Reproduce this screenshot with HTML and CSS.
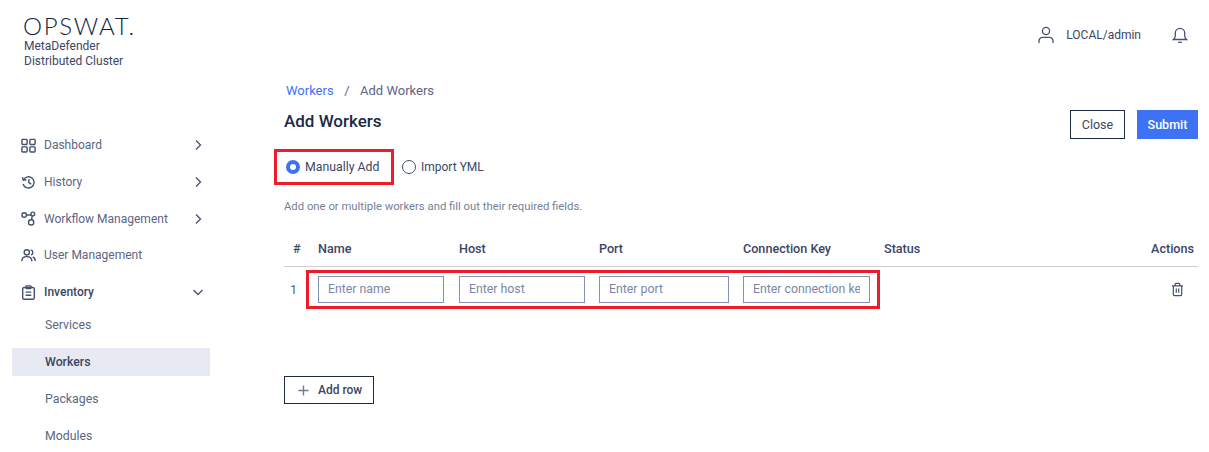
FILE: index.html
```html
<!DOCTYPE html>
<html lang="en">
<head>
<meta charset="utf-8">
<title>Add Workers</title>
<link rel="stylesheet" href="styles.css">
</head>
<body>
<div class="app">
  <aside class="sidebar">
    <div class="brand">
      <div class="logo">OPSWAT.</div>
      <div class="product">MetaDefender<br>Distributed Cluster</div>
    </div>
    <nav class="nav">
      <a class="nav-item">
        <svg class="nav-icon" viewBox="0 0 16 16"><rect x="1" y="1.500" width="5.500" height="5.500" rx=".8"/><rect x="9.500" y="1.500" width="5.500" height="5.500" rx=".8"/><rect x="1" y="9.500" width="5.500" height="5.500" rx=".8"/><rect x="9.500" y="9.500" width="5.500" height="5.500" rx=".8"/></svg>
        <span class="nav-label">Dashboard</span>
        <svg class="chev" viewBox="0 0 12 12"><path d="M4 1.500 8.500 6 4 10.500"/></svg>
      </a>
      <a class="nav-item">
        <svg class="nav-icon" viewBox="0 0 16 16"><path d="M2.600 5.200A6 6 0 1 1 2.200 9.600"/><path d="M1.600 2.200 2.400 5.600 5.800 5"/><path d="M8.400 4.600V8.200L11 9.800"/></svg>
        <span class="nav-label">History</span>
        <svg class="chev" viewBox="0 0 12 12"><path d="M4 1.500 8.500 6 4 10.500"/></svg>
      </a>
      <a class="nav-item">
        <svg class="nav-icon" viewBox="0 0 16 16"><circle cx="3.400" cy="4.200" r="2.400"/><circle cx="12.600" cy="3.200" r="2"/><circle cx="10.800" cy="12.200" r="2.800"/><path d="M5.800 4.200h4.800M12 5.200l-.8 4.200"/></svg>
        <span class="nav-label">Workflow Management</span>
        <svg class="chev" viewBox="0 0 12 12"><path d="M4 1.500 8.500 6 4 10.500"/></svg>
      </a>
      <a class="nav-item">
        <svg class="nav-icon" viewBox="0 0 16 16"><circle cx="6.200" cy="4.600" r="2.800"/><path d="M.8 14c0-3 2.200-4.800 5.400-4.800s5.400 1.800 5.400 4.800"/><path d="M10.400 2c1.400.3 2.200 1.400 2.200 2.700s-.8 2.300-2 2.700M12.600 9.600c1.600.6 2.600 2.200 2.600 4.200"/></svg>
        <span class="nav-label">User Management</span>
      </a>
      <a class="nav-item open">
        <svg class="nav-icon" viewBox="0 0 16 16"><rect x="1.800" y="2.600" width="12.400" height="12.600" rx="1.600"/><rect x="5.400" y=".9" width="5.200" height="3" rx=".6"/><path d="M5 7.600h6M5 11h6"/></svg>
        <span class="nav-label">Inventory</span>
        <svg class="chev" viewBox="0 0 12 12"><path d="M1.500 4 6 8.500 10.500 4"/></svg>
      </a>
      <a class="sub-item">Services</a>
      <a class="sub-item active">Workers</a>
      <a class="sub-item">Packages</a>
      <a class="sub-item">Modules</a>
    </nav>
  </aside>

  <div class="content">
    <header class="topbar">
      <svg class="user-icon" viewBox="0 0 16 18"><circle cx="8" cy="5" r="3.600"/><path d="M1 17v-1.600C1 13 2.800 11.400 5 11.400h6c2.200 0 4 1.600 4 4V17"/></svg>
      <span class="user-name">LOCAL/admin</span>
      <svg class="bell-icon" viewBox="0 0 16 18"><path d="M1.500 13.500c1.200-1 1.800-2.200 1.800-4V7a4.700 4.700 0 0 1 9.400 0v2.500c0 1.800.6 3 1.800 4z"/><path d="M6.200 16.300h3.600"/></svg>
    </header>

    <main class="main">
      <div class="breadcrumb"><a class="crumb-link">Workers</a><span class="crumb-sep">/</span><span>Add Workers</span></div>
      <div class="title-row">
        <h1 class="title">Add Workers</h1>
        <div class="actions">
          <button class="btn btn-outline">Close</button>
          <button class="btn btn-primary">Submit</button>
        </div>
      </div>
      <div class="radio-row">
        <label class="radio-box"><span class="radio checked"></span>Manually Add</label>
        <label class="radio-plain"><span class="radio"></span>Import YML</label>
      </div>
      <p class="hint">Add one or multiple workers and fill out their required fields.</p>

      <div class="table">
        <div class="grid-row thead">
          <span class="num">#</span><span>Name</span><span>Host</span><span>Port</span><span>Connection Key</span><span>Status</span><span class="right">Actions</span>
        </div>
        <div class="grid-row tbody">
          <span class="index">1</span>
          <input class="field w-name" placeholder="Enter name">
          <input class="field w-host" placeholder="Enter host">
          <input class="field w-port" placeholder="Enter port">
          <input class="field w-key" placeholder="Enter connection key">
          <span></span>
          <span class="right"><svg class="trash" viewBox="0 0 14 15"><path d="M1 3.500h12M4.500 3.500V2c0-.6.400-1 1-1h3c.6 0 1 .4 1 1v1.500M2.500 3.500v9.300c0 .7.500 1.200 1.200 1.200h6.600c.7 0 1.200-.5 1.200-1.200V3.500M5.700 6.500v4.500M8.300 6.500v4.500"/></svg></span>
          <div class="annotation"></div>
        </div>
      </div>

      <button class="btn-add"><svg class="plus" viewBox="0 0 12 12"><path d="M6 .5v11M.5 6h11"/></svg>Add row</button>
    </main>
  </div>
</div>
</body>
</html>
```

FILE: styles.css
```css
* { box-sizing: border-box; }
html, body { margin: 0; height: 452px; overflow: hidden; background: #fff; }
body { font-family: "Roboto", "Liberation Sans", sans-serif; font-size: 12px; color: #3b4664; }

.app { display: flex; height: 452px; }

.sidebar { width: 198px; margin-left: 12px; flex: none; }
.brand { padding: 13px 0 0 11px; height: 127px; }
.logo { font-family: "Lato", sans-serif; font-weight: 300; font-size: 24px; line-height: 26px; letter-spacing: 1.700px; color: #16233f; }
.product { font-size: 12px; line-height: 15px; color: #3b4664; padding-left: 1px; }

.nav { display: flex; flex-direction: column; }
.nav-item { display: flex; align-items: center; height: 36.700px; padding-left: 9px; font-size: 12px; color: #5a6684; }
.nav-item.open { color: #3b4664; font-weight: 500; }
.nav-icon { width: 15px; height: 15px; flex: none; fill: none; stroke: #465170; stroke-width: 1.500; margin-right: 8px; }
.nav-label { flex: 1; }
.chev { width: 12px; height: 12px; flex: none; margin-right: 6px; fill: none; stroke: #465170; stroke-width: 1.300; }
.sub-item { display: flex; align-items: center; height: 28px; padding: 0 0 1px 33px; margin-bottom: 8.900px; font-size: 12.300px; color: #5a6684; }
.open + .sub-item { margin-top: 1px; }
.sub-item.active { background: #e7eaf2; color: #3b4664; font-weight: 500; }

.content { flex: 1; min-width: 0; display: flex; flex-direction: column; }
.topbar { height: 69px; display: flex; align-items: center; justify-content: flex-end; padding-right: 21px; }
.user-icon { width: 16px; height: 18px; fill: none; stroke: #465170; stroke-width: 1.300; margin-right: 12px; }
.user-name { font-size: 12px; color: #3b4664; margin-right: 31px; }
.bell-icon { width: 16px; height: 18px; fill: none; stroke: #465170; stroke-width: 1.300; }

.main { padding: 0 11px 0 74px; }
.breadcrumb { padding: 14px 0 0 2px; height: 33px; font-size: 13px; line-height: 16px; color: #5a6684; }
.crumb-link { color: #3d72f5; }
.crumb-sep { margin: 0 10.500px; }
.title-row { display: flex; justify-content: space-between; align-items: flex-start; height: 47px; padding-top: 8px; }
.title { margin: 0; font-size: 17px; font-weight: 500; line-height: 22px; color: #1d2a44; }
.actions { display: flex; gap: 12px; }
.btn { height: 29px; font-family: inherit; font-size: 12.500px; padding: 0; cursor: pointer; }
.btn-outline { width: 55px; background: #fff; border: 1px solid #1d2a44; color: #3b4664; }
.btn-primary { width: 61px; background: #3d72f5; border: 0; color: #fff; font-weight: 500; }

.radio-row { display: flex; align-items: center; margin-left: -10px; height: 36px; }
.radio-box { display: flex; align-items: center; height: 36px; width: 120px; border: 3px solid #ed1c2b; padding-left: 9px; font-size: 12.300px; color: #3b4664; }
.radio-plain { display: flex; align-items: center; margin-left: 8px; font-size: 12px; color: #3b4664; }
.radio { width: 14px; height: 14px; border-radius: 50%; border: 1px solid #465170; margin-right: 5px; flex: none; }
.radio.checked { border: 4px solid #3d72f5; background: #fff; }

.hint { margin: 15px 0 0; font-size: 11.300px; line-height: 14px; color: #757f97; }

.table { margin-top: 19px; }
.grid-row { display: grid; grid-template-columns: 34px 141px 140px 144px 141px 1fr auto; align-items: center; position: relative; }
.thead { height: 34px; border-bottom: 1px solid #cfcfcf; font-size: 12.600px; font-weight: 500; color: #3b4664; padding-bottom: 2px; }
.num { padding-left: 9px; }
.right { padding-right: 4px; text-align: right; }
.tbody { height: 44px; }
.index { padding-left: 6px; font-size: 12.500px; color: #2f6f9f; }
.field { height: 27px; padding: 0 9px; border: 1px solid #8791b4; border-radius: 0; background: #fff; font-family: inherit; font-size: 12.300px; color: #3b4664; outline: 0; }
.field::placeholder { color: #7a86a8; opacity: 1; }
.w-name { width: 126px; }
.w-host { width: 126px; }
.w-port { width: 130px; }
.w-key { width: 127px; }
.trash { width: 13px; height: 15px; fill: none; stroke: #465170; stroke-width: 1.300; display: inline-block; vertical-align: middle; margin-right: 10px; }
.annotation { position: absolute; left: 22px; top: 3px; width: 574px; height: 39px; border: 3px solid #ed1c2b; pointer-events: none; }

.btn-add { display: flex; align-items: center; margin-top: 65px; width: 90px; height: 28px; padding: 0 0 0 13px; background: #fff; border: 1px solid #1d2a44; font-family: inherit; font-size: 12px; font-weight: 500; color: #3b4664; }
.plus { width: 11px; height: 11px; fill: none; stroke: #6f7a93; stroke-width: 1.500; margin-right: 9px; flex: none; }
```
